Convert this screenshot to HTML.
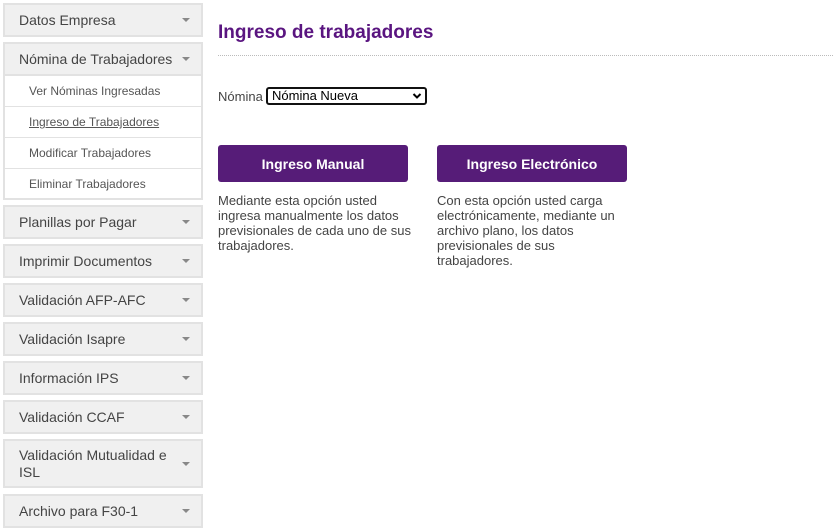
<!DOCTYPE html>
<html><head><meta charset="utf-8"><style>
*{box-sizing:border-box;margin:0;padding:0}
body{width:837px;height:532px;background:#fff;font-family:"Liberation Sans",Arial,sans-serif;position:relative;overflow:hidden}
.h{position:absolute;left:3px;width:200px;background:#f0f0f0;border:2px solid #e2e2e2;color:#444;font-size:14px;padding-left:14px;display:flex;align-items:center;line-height:17px}
.h:after{content:"";position:absolute;right:11px;top:50%;margin-top:-2px;border-left:4px solid transparent;border-right:4px solid transparent;border-top:4px solid #888}
.s{position:absolute;left:3px;width:200px;height:32px;border:2px solid #e2e2e2;border-top:1px solid #e2e2e2;border-bottom:1px solid #e2e2e2;background:#fff;color:#555;font-size:12px;padding-left:24px;display:flex;align-items:center}
.btn{position:absolute;top:145px;height:37px;width:190px;background:#561c78;border-radius:3px;color:#fff;font-weight:bold;font-size:14px;display:flex;align-items:center;justify-content:center}
.p{position:absolute;top:193px;font-size:13px;line-height:15px;color:#444;width:200px}
</style></head><body>
<div class="h" style="top:3px;height:34px">Datos Empresa</div>
<div class="h" style="top:42px;height:34px">Nómina de Trabajadores</div>
<div class="s" style="top:75px">Ver Nóminas Ingresadas</div>
<div class="s" style="top:106px"><span style="text-decoration:underline">Ingreso de Trabajadores</span></div>
<div class="s" style="top:137px">Modificar Trabajadores</div>
<div class="s" style="top:168px;border-bottom:2px solid #e2e2e2">Eliminar Trabajadores</div>
<div class="h" style="top:205px;height:34px">Planillas por Pagar</div>
<div class="h" style="top:244px;height:34px">Imprimir Documentos</div>
<div class="h" style="top:283px;height:34px">Validación AFP-AFC</div>
<div class="h" style="top:322px;height:34px">Validación Isapre</div>
<div class="h" style="top:361px;height:34px">Información IPS</div>
<div class="h" style="top:400px;height:34px">Validación CCAF</div>
<div class="h" style="top:439px;height:49px;padding-right:30px">Validación Mutualidad e ISL</div>
<div class="h" style="top:494px;height:34px">Archivo para F30-1</div>

<div style="position:absolute;left:218px;top:22px;font-size:19px;font-weight:bold;color:#5a1580">Ingreso de trabajadores</div>
<div style="position:absolute;left:218px;top:55px;width:615px;border-top:1px dotted #bbb"></div>
<div style="position:absolute;left:218px;top:89px;font-size:13px;color:#444">Nómina</div>
<div style="position:absolute;left:266px;top:87px;width:161px;height:18px;border:2px solid #111;border-radius:3px;font-size:13px;line-height:14px;padding-left:4px;color:#000">Nómina Nueva
<svg style="position:absolute;right:3px;top:3px" width="10" height="8" viewBox="0 0 10 8"><path d="M1.5 2 L5 5.5 L8.5 2" stroke="#000" stroke-width="2" fill="none"/></svg></div>
<div class="btn" style="left:218px">Ingreso Manual</div>
<div class="btn" style="left:437px">Ingreso Electrónico</div>
<div class="p" style="left:218px">Mediante esta opción usted ingresa manualmente los datos previsionales de cada uno de sus trabajadores.</div>
<div class="p" style="left:437px;width:185px">Con esta opción usted carga electrónicamente, mediante un archivo plano, los datos previsionales de sus trabajadores.</div>
</body></html>
